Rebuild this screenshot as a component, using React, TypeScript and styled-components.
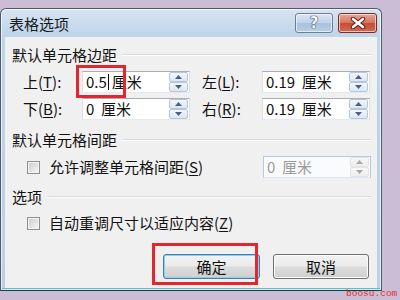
import React from "react";
import styled, { createGlobalStyle, css } from "styled-components";

const Global = createGlobalStyle`
  html, body { margin: 0; padding: 0; background: #cbbdd5; }
  body {
    width: 400px; height: 300px; overflow: hidden;
    font-family: "Noto Sans CJK SC", "Noto Sans", sans-serif;
    color: #111;
  }
`;

const Page = styled.div`
  position: relative;
  width: 400px;
  height: 300px;
  padding-top: 8px;
  box-sizing: border-box;
`;

const Window = styled.div`
  width: 382px;
  height: 283px;
  box-sizing: border-box;
  display: flex;
  flex-direction: column;
  border: 1px solid #4f5a6e;
  border-bottom-color: #1f3a44;
  border-radius: 6px 6px 0 0;
  background: linear-gradient(#d6e4f3, #bed4ea 28px, #b9d0e8);
  padding: 0 4px 2px 4px;
  box-shadow: inset 0 0 0 1px rgba(255, 255, 255, 0.7), inset 0 -2px 0 #5fbfc6;
`;

const TitleBar = styled.div`
  height: 28px;
  display: flex;
  align-items: flex-start;
  padding: 4px 0 0 4px;
  box-sizing: border-box;
`;

const Title = styled.div`
  flex: 1;
  font-size: 15px;
  line-height: 22px;
  color: #1a1a1a;
`;

const CaptionButton = styled.div<{ $close?: boolean }>`
  width: 38px;
  height: 20px;
  box-sizing: border-box;
  border: 1px solid #6d7f96;
  border-radius: 3px;
  display: flex;
  align-items: center;
  justify-content: center;
  background: linear-gradient(#dbe7f4, #bfd2e8 50%, #a9c1dd 51%, #b9cee6);
  box-shadow: inset 0 0 0 1px rgba(255, 255, 255, 0.6);
  ${(p) =>
    p.$close &&
    css`
      width: 39px;
      margin-left: 5px;
      border-color: #7a2a1e;
      background: linear-gradient(#e9a594, #d8735f 50%, #c34d36 51%, #d46a50);
    `}
`;

const HelpGlyph = styled.span`
  font-family: "DejaVu Sans", sans-serif;
  font-weight: bold;
  font-size: 15px;
  line-height: 1;
  color: #eef3f9;
  text-shadow: 0 0 1px #34465c, 0 0 1px #34465c, 0 0 1px #34465c;
`;

const Client = styled.div`
  flex: 1;
  background: #f0f0f0;
  padding: 10px 6px 0 7px;
  display: flex;
  flex-direction: column;
  box-sizing: border-box;
`;

const GroupHeader = styled.div<{ $top: number }>`
  margin-top: ${(p) => p.$top}px;
  height: 16px;
  display: flex;
  align-items: center;
  font-size: 15px;
  line-height: 16px;
  white-space: nowrap;
  &::after {
    content: "";
    flex: 1;
    margin-left: 5px;
    height: 0;
    border-top: 1px solid #d5dbe2;
    border-bottom: 1px solid #ffffff;
  }
`;

const Row = styled.div<{ $top: number }>`
  margin-top: ${(p) => p.$top}px;
  height: 22px;
  display: flex;
  align-items: center;
  padding-left: 11px;
  font-size: 15px;
  white-space: nowrap;
`;

const Label = styled.div<{ $w: number; $gap?: number }>`
  width: ${(p) => p.$w}px;
  margin-left: ${(p) => p.$gap ?? 0}px;
  font-size: 15px;
  line-height: 22px;
`;

const U = styled.span`
  text-decoration: underline;
  text-underline-offset: 2px;
`;

const Field = styled.div<{ $disabled?: boolean }>`
  position: relative;
  width: 108px;
  height: 22px;
  box-sizing: border-box;
  border: 1px solid #abadb3;
  border-left-color: #dbdfe6;
  border-right-color: #dbdfe6;
  border-bottom-color: #e3e9ef;
  background: #ffffff;
  display: flex;
  align-items: center;
  padding-left: 3px;
  font-size: 15px;
  line-height: 20px;
  color: #111;
  white-space: pre;
  ${(p) =>
    p.$disabled &&
    css`
      margin-left: auto;
      background: #fafbfc;
      border-color: #b5c8e0;
      border-bottom-color: #dde5ee;
      color: #9a9a9a;
    `}
`;

const Caret = styled.span`
  display: inline-block;
  width: 1px;
  height: 16px;
  background: #000;
  margin: 0 3px 0 1px;
`;

const Spinner = styled.div`
  margin-left: auto;
  margin-right: 1px;
  width: 19px;
  height: 20px;
  display: flex;
  flex-direction: column;
`;

const SpinBtn = styled.div<{ $disabled?: boolean }>`
  flex: 1;
  box-sizing: border-box;
  border: 1px solid #b6c6db;
  border-radius: 2px;
  background: linear-gradient(#f3f6fb, #dce6f4);
  display: flex;
  align-items: center;
  justify-content: center;
  color: #4b6088;
  ${(p) =>
    p.$disabled &&
    css`
      border-color: #e1e3e6;
      background: linear-gradient(#f7f7f7, #eeeeee);
      color: #a8a8a8;
    `}
`;

const Arrow = ({ up }: { up?: boolean }) => (
  <svg width="7" height="4" viewBox="0 0 7 4">
    <path d={up ? "M0 4 L3.5 0 L7 4 Z" : "M0 0 L3.5 4 L7 0 Z"} fill="currentColor" />
  </svg>
);

const Check = styled.div`
  width: 13px;
  height: 13px;
  box-sizing: border-box;
  margin-left: 2px;
  margin-right: 9px;
  border: 1px solid #8f8f8f;
  background: linear-gradient(135deg, #cbcbcb, #f7f7f7);
  box-shadow: inset 0 0 0 1px #f4f4f4;
`;

const CheckRow = styled(Row)`
  padding-left: 13px;
`;

const CheckLabel = styled.div`
  font-size: 15px;
  line-height: 22px;
`;

const ButtonRow = styled.div`
  margin-top: 20px;
  display: flex;
  justify-content: flex-end;
  gap: 13px;
  padding-right: 2px;
`;

const Button = styled.div<{ $default?: boolean; $w: number }>`
  width: ${(p) => p.$w}px;
  height: 25px;
  box-sizing: border-box;
  border: 1px solid #707070;
  border-radius: 3px;
  background: linear-gradient(#f2f2f2 0%, #ebebeb 48%, #dddddd 52%, #cfcfcf 100%);
  box-shadow: inset 0 0 0 1px #fbfbfb;
  display: flex;
  align-items: center;
  justify-content: center;
  font-size: 15px;
  color: #111;
  ${(p) =>
    p.$default &&
    css`
      border-color: #3c7fb1;
      box-shadow: inset 0 0 0 1px #8ed0f0;
    `}
`;

const Annotation = styled.div<{ $x: number; $y: number; $w: number; $h: number }>`
  position: absolute;
  left: ${(p) => p.$x}px;
  top: ${(p) => p.$y}px;
  width: ${(p) => p.$w}px;
  height: ${(p) => p.$h}px;
  box-sizing: border-box;
  border: 3px solid #e5262e;
  pointer-events: none;
`;

const Watermark = styled.div`
  position: absolute;
  left: 346px;
  top: 288px;
  font-family: "Liberation Mono", monospace;
  font-size: 9.5px;
  line-height: 12px;
  white-space: pre;
  color: #e0302c;
`;

const SpinBox = ({ disabled }: { disabled?: boolean }) => (
  <Spinner>
    <SpinBtn $disabled={disabled}>
      <Arrow up />
    </SpinBtn>
    <SpinBtn $disabled={disabled}>
      <Arrow />
    </SpinBtn>
  </Spinner>
);

export default function App() {
  return (
    <Page>
      <Global />
      <Window>
        <TitleBar>
          <Title>表格选项</Title>
          <CaptionButton>
            <HelpGlyph>?</HelpGlyph>
          </CaptionButton>
          <CaptionButton $close>
            <svg width="16" height="12" viewBox="0 0 16 12">
              <path
                d="M3 2 L13 10 M13 2 L3 10"
                stroke="#5a1f14"
                strokeWidth="4.5"
                strokeLinecap="round"
              />
              <path
                d="M3 2 L13 10 M13 2 L3 10"
                stroke="#ffffff"
                strokeWidth="2.6"
                strokeLinecap="round"
              />
            </svg>
          </CaptionButton>
        </TitleBar>
        <Client>
          <GroupHeader $top={0}>默认单元格边距</GroupHeader>
          <Row $top={8}>
            <Label $w={59}>
              上(<U>T</U>):
            </Label>
            <Field>
              0.5
              <Caret />
              厘米
              <SpinBox />
            </Field>
            <Label $w={60} $gap={12}>
              左(<U>L</U>):
            </Label>
            <Field>
              {"0.19  厘米"}
              <SpinBox />
            </Field>
          </Row>
          <Row $top={5}>
            <Label $w={59}>
              下(<U>B</U>):
            </Label>
            <Field>
              {"0  厘米"}
              <SpinBox />
            </Field>
            <Label $w={60} $gap={12}>
              右(<U>R</U>):
            </Label>
            <Field>
              {"0.19  厘米"}
              <SpinBox />
            </Field>
          </Row>
          <GroupHeader $top={12}>默认单元格间距</GroupHeader>
          <CheckRow $top={8}>
            <Check />
            <CheckLabel>
              允许调整单元格间距(<U>S</U>)
            </CheckLabel>
            <Field $disabled>
              {"0  厘米"}
              <SpinBox disabled />
            </Field>
          </CheckRow>
          <GroupHeader $top={11}>选项</GroupHeader>
          <CheckRow $top={7}>
            <Check />
            <CheckLabel>
              自动重调尺寸以适应内容(<U>Z</U>)
            </CheckLabel>
          </CheckRow>
          <ButtonRow>
            <Button $default $w={97}>
              确定
            </Button>
            <Button $w={96}>取消</Button>
          </ButtonRow>
        </Client>
      </Window>
      <Annotation $x={76} $y={65} $w={50} $h={33} />
      <Annotation $x={152} $y={243} $w={106} $h={42} />
      <Watermark>boosu.com</Watermark>
    </Page>
  );
}
